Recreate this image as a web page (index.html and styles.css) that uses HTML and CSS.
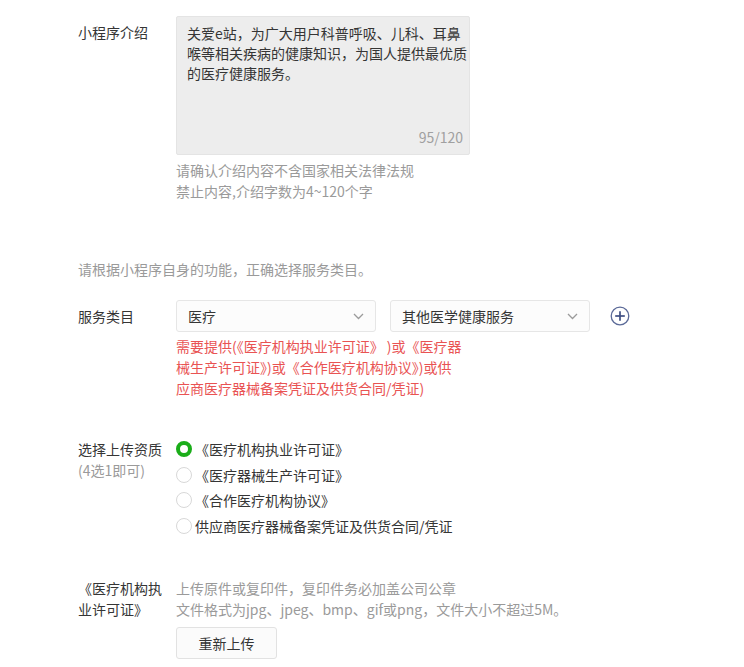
FILE: index.html
```html
<!DOCTYPE html>
<html lang="zh-CN">
<head>
<meta charset="utf-8">
<link rel="stylesheet" href="styles.css">
</head>
<body>
<div class="form">
  <div class="row row-intro">
    <div class="label label-intro">小程序介绍</div>
    <div class="field">
      <div class="textarea">
        <div class="textarea-text">关爱e站，为广大用户科普呼吸、儿科、耳鼻<br>喉等相关疾病的健康知识，为国人提供最优质<br>的医疗健康服务。</div>
        <div class="counter">95/120</div>
      </div>
      <div class="hint hint-intro">请确认介绍内容不含国家相关法律法规<br>禁止内容,介绍字数为4~120个字</div>
    </div>
  </div>

  <div class="notice">请根据小程序自身的功能，正确选择服务类目。</div>

  <div class="row row-category">
    <div class="label label-category">服务类目</div>
    <div class="field">
      <div class="select-line">
        <div class="select">
          <span>医疗</span>
          <svg class="chevron" width="11" height="7" viewBox="0 0 11 7"><polyline points="1,1 5.5,5.5 10,1" fill="none" stroke="#9b9b9b" stroke-width="1.3"/></svg>
        </div>
        <div class="select">
          <span>其他医学健康服务</span>
          <svg class="chevron" width="11" height="7" viewBox="0 0 11 7"><polyline points="1,1 5.5,5.5 10,1" fill="none" stroke="#9b9b9b" stroke-width="1.3"/></svg>
        </div>
        <svg class="plus" width="20" height="20" viewBox="0 0 20 20"><circle cx="10" cy="10" r="8.8" fill="none" stroke="#5b6a98" stroke-width="1.3"/><line x1="10" y1="5.2" x2="10" y2="14.8" stroke="#3f4f82" stroke-width="1.7"/><line x1="5.2" y1="10" x2="14.8" y2="10" stroke="#3f4f82" stroke-width="1.7"/></svg>
      </div>
      <div class="warn">需要提供(《医疗机构执业许可证》 )或《医疗器<br>械生产许可证》)或《合作医疗机构协议》)或供<br>应商医疗器械备案凭证及供货合同/凭证)</div>
    </div>
  </div>

  <div class="row row-qual">
    <div class="label label-qual">选择上传资质<br><span class="sub">(4选1即可)</span></div>
    <div class="options">
      <div class="option"><span class="radio radio-on"></span><span>《医疗机构执业许可证》</span></div>
      <div class="option"><span class="radio"></span><span>《医疗器械生产许可证》</span></div>
      <div class="option"><span class="radio"></span><span>《合作医疗机构协议》</span></div>
      <div class="option"><span class="radio"></span><span>供应商医疗器械备案凭证及供货合同/凭证</span></div>
    </div>
  </div>

  <div class="row row-upload">
    <div class="label label-upload">《医疗机构执业许可证》</div>
    <div class="field">
      <div class="hint">上传原件或复印件，复印件务必加盖公司公章<br>文件格式为jpg、jpeg、bmp、gif或png，文件大小不超过5M。</div>
      <div class="button">重新上传</div>
    </div>
  </div>
</div>
</body>
</html>
```

FILE: styles.css
```css
html, body {
  margin: 0;
  padding: 0;
  background: #ffffff;
}

body {
  font-family: "Noto Sans CJK SC", "Microsoft YaHei", sans-serif;
  font-size: 14px;
  color: #353535;
}

.form {
  padding-left: 78px;
  padding-top: 16px;
}

.row {
  display: flex;
  align-items: flex-start;
}

.label {
  width: 90px;
  margin-right: 8px;
  flex-shrink: 0;
  line-height: 21px;
  color: #353535;
}

.label-intro {
  padding-top: 6px;
}

.field {
  display: flex;
  flex-direction: column;
  align-items: flex-start;
}

.textarea {
  box-sizing: border-box;
  width: 294px;
  height: 139px;
  background: #ededed;
  border: 1px solid #e4e4e4;
  border-radius: 2px;
  padding: 6px 4px 7px 10px;
  display: flex;
  flex-direction: column;
}

.textarea-text {
  line-height: 20px;
  white-space: nowrap;
  color: #353535;
}

.counter {
  margin-top: auto;
  align-self: flex-end;
  line-height: 20px;
  color: #a0a0a0;
  padding-right: 2px;
}

.hint {
  color: #9a9a9a;
  line-height: 21px;
  white-space: nowrap;
}

.hint-intro {
  margin-top: 5px;
}

.notice {
  margin-top: 57px;
  color: #9a9a9a;
  line-height: 20px;
}

.row-category {
  margin-top: 21px;
}

.label-category {
  line-height: 32px;
}

.select-line {
  display: flex;
  align-items: center;
}

.select {
  box-sizing: border-box;
  width: 200px;
  height: 32px;
  border: 1px solid #e6e6e6;
  border-radius: 3px;
  background: #fcfcfc;
  display: flex;
  align-items: center;
  justify-content: space-between;
  padding: 0 11px 0 11px;
  margin-right: 14px;
  color: #353535;
}

.select:nth-child(2) {
  margin-right: 21px;
}

.chevron {
  display: block;
}

.plus {
  display: block;
  margin-left: -1px;
}

.warn {
  margin-top: 4px;
  color: #e95353;
  line-height: 21px;
  white-space: nowrap;
}

.row-qual {
  margin-top: 40px;
}

.label-qual {
  padding-top: 0;
}

.sub {
  color: #9a9a9a;
}

.options {
  margin-top: -3px;
  display: flex;
  flex-direction: column;
}

.option {
  display: flex;
  align-items: center;
  height: 25.7px;
  color: #353535;
}

.radio {
  box-sizing: border-box;
  width: 16px;
  height: 16px;
  border-radius: 50%;
  border: 1px solid #d8d8d8;
  background: #fff;
  margin-right: 3px;
  flex-shrink: 0;
}

.radio-on {
  border: 4.5px solid #1aad19;
}

.row-upload {
  margin-top: 39px;
}

.button {
  box-sizing: border-box;
  margin-top: 7px;
  width: 101px;
  height: 32px;
  border: 1px solid #e2e2e2;
  border-radius: 3px;
  background: #fbfbfb;
  display: flex;
  align-items: center;
  justify-content: center;
  color: #353535;
}
```
